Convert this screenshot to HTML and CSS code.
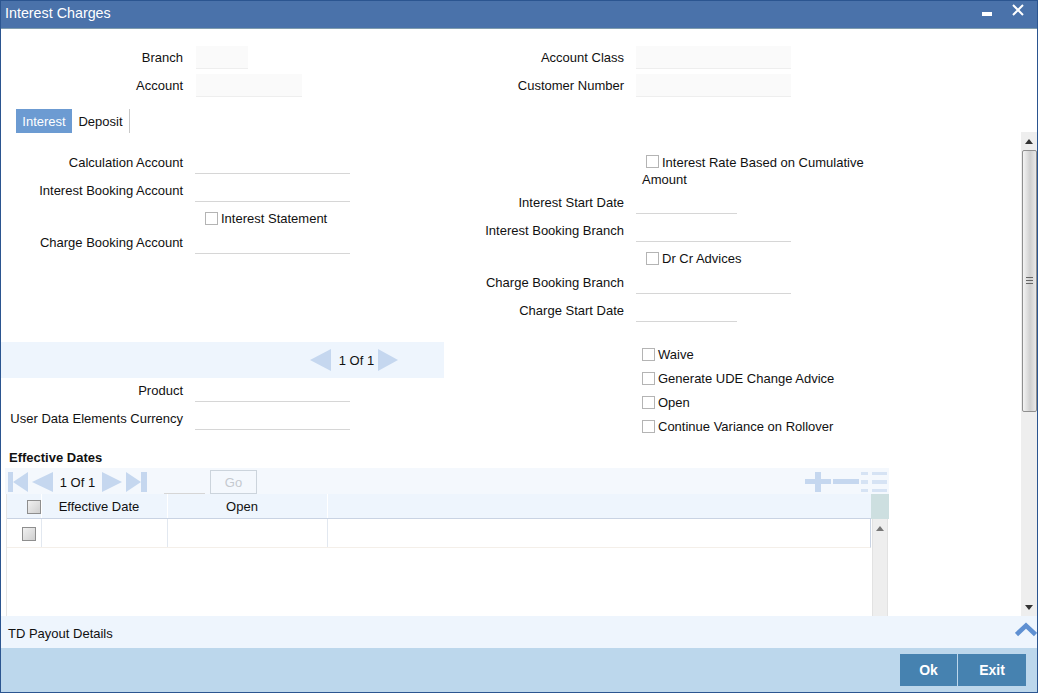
FILE: index.html
```html
<!DOCTYPE html>
<html lang="en">
<head>
<meta charset="utf-8">
<title>Interest Charges</title>
<link rel="stylesheet" href="styles.css">
</head>
<body>
<div class="window">
  <header class="titlebar">
    <h1 class="title">Interest Charges</h1>
    <div class="win-controls">
      <svg class="win-min" width="10" height="4" viewBox="0 0 10 4"><rect width="10" height="4" fill="#fff"/></svg>
      <svg class="win-close" width="12" height="12" viewBox="0 0 12 12"><path d="M1 1 11 11M11 1 1 11" stroke="#fff" stroke-width="2" fill="none"/></svg>
    </div>
  </header>

  <section class="header-form">
    <div class="header-col">
      <div class="row"><label class="lbl lbl-left">Branch</label><input class="field field-head w52"></div>
      <div class="row"><label class="lbl lbl-left">Account</label><input class="field field-head w106"></div>
    </div>
    <div class="header-col">
      <div class="row"><label class="lbl lbl-right">Account Class</label><input class="field field-head w155"></div>
      <div class="row"><label class="lbl lbl-right">Customer Number</label><input class="field field-head w155"></div>
    </div>
  </section>

  <nav class="tabs">
    <span class="tab tab-active">Interest</span>
    <span class="tab">Deposit</span>
  </nav>

  <div class="scroll-area">
    <div class="scroll-content">
      <div class="form-grid">
        <div class="col-left">
          <div class="row"><label class="lbl lbl-left">Calculation Account</label><input class="field w155"></div>
          <div class="row"><label class="lbl lbl-left">Interest Booking Account</label><input class="field w155"></div>
          <div class="check-row-left"><input type="checkbox" class="check"><span>Interest Statement</span></div>
          <div class="row"><label class="lbl lbl-left">Charge Booking Account</label><input class="field w155"></div>
          <div class="pager">
            <svg width="21" height="22" viewBox="0 0 21 22"><path d="M21 0V22L0 11Z" fill="#c5d7ef"/></svg>
            <span class="pager-text">1 Of 1</span>
            <svg width="20" height="22" viewBox="0 0 20 22"><path d="M0 0V22L20 11Z" fill="#c5d7ef"/></svg>
          </div>
          <div class="row row-first"><label class="lbl lbl-left">Product</label><input class="field w155"></div>
          <div class="row"><label class="lbl lbl-left">User Data Elements Currency</label><input class="field w155"></div>
        </div>
        <div class="col-right">
          <div class="wrap-check"><input type="checkbox" class="check check-wrap">Interest Rate Based on Cumulative<br>Amount</div>
          <div class="row"><label class="lbl lbl-right">Interest Start Date</label><input class="field w101"></div>
          <div class="row"><label class="lbl lbl-right">Interest Booking Branch</label><input class="field w155"></div>
          <div class="check-row-dr"><input type="checkbox" class="check"><span>Dr Cr Advices</span></div>
          <div class="row"><label class="lbl lbl-right">Charge Booking Branch</label><input class="field w155"></div>
          <div class="row"><label class="lbl lbl-right">Charge Start Date</label><input class="field w101"></div>
          <div class="check-list">
            <div class="check-item"><input type="checkbox" class="check"><span>Waive</span></div>
            <div class="check-item"><input type="checkbox" class="check"><span>Generate UDE Change Advice</span></div>
            <div class="check-item"><input type="checkbox" class="check"><span>Open</span></div>
            <div class="check-item"><input type="checkbox" class="check"><span>Continue Variance on Rollover</span></div>
          </div>
        </div>
      </div>

      <h2 class="section-title">Effective Dates</h2>
      <div class="toolbar">
        <div class="tool-nav">
          <svg width="20" height="20" viewBox="0 0 20 20"><path d="M0 0H5V20H0ZM20 0V20L5 10Z" fill="#c5d7ef"/></svg>
          <svg width="21" height="20" viewBox="0 0 21 20"><path d="M21 0V20L0 10Z" fill="#c5d7ef"/></svg>
          <span class="tool-text">1 Of 1</span>
          <svg width="20" height="20" viewBox="0 0 20 20"><path d="M0 0V20L20 10Z" fill="#c5d7ef"/></svg>
          <svg width="21" height="20" viewBox="0 0 21 20"><path d="M0 0 15 10 0 20ZM15 0H21V20H15Z" fill="#c5d7ef"/></svg>
          <input class="go-input">
          <button class="go-btn" type="button">Go</button>
        </div>
        <div class="tool-actions">
          <svg width="26" height="20" viewBox="0 0 26 20"><path d="M0 7H10V0H16V7H26V12H16V20H10V12H0Z" fill="#c5d7ef"/></svg>
          <svg width="26" height="20" viewBox="0 0 26 20"><rect y="7" width="26" height="5" fill="#c5d7ef"/></svg>
          <svg width="26" height="20" viewBox="0 0 26 20"><path d="M0 0H7V3H0ZM11 0H26V3H11ZM0 8H7V12H0ZM11 8H26V12H11ZM0 17H7V20H0ZM11 17H26V20H11Z" fill="#d6e3f4"/></svg>
        </div>
      </div>

      <div class="table-wrap">
        <div class="table-main">
          <div class="thead">
            <div class="cell cell-check"><input type="checkbox" class="check check-grey check-head"></div>
            <div class="cell cell-date th-text">Effective Date</div>
            <div class="cell cell-open th-text">Open</div>
            <div class="cell cell-rest"></div>
          </div>
          <div class="tbody-row">
            <div class="cell cell-check"><input type="checkbox" class="check check-grey check-body"></div>
            <div class="cell cell-date"></div>
            <div class="cell cell-open"></div>
            <div class="cell cell-rest"></div>
          </div>
        </div>
        <div class="table-side">
          <div class="side-head"></div>
          <div class="side-track">
            <svg class="arrow" width="8" height="5" viewBox="0 0 8 5"><path d="M4 0 8 5H0Z" fill="#777"/></svg>
          </div>
        </div>
      </div>
    </div>

    <div class="scrollbar">
      <div class="sb-btn">
        <svg width="8" height="5" viewBox="0 0 8 5"><path d="M4 0 8 5H0Z" fill="#333"/></svg>
      </div>
      <div class="sb-thumb"><span class="grip"></span></div>
      <div class="sb-rest">
        <svg width="8" height="5" viewBox="0 0 8 5"><path d="M0 0H8L4 5Z" fill="#333"/></svg>
      </div>
    </div>
  </div>

  <div class="payout">
    <span class="payout-text">TD Payout Details</span>
    <svg width="22" height="15" viewBox="0 0 22 15"><path d="M1.500 12.500 11 3.500 20.500 12.500" fill="none" stroke="#5f90d2" stroke-width="4.500"/></svg>
  </div>

  <footer class="footer">
    <button class="action" type="button">Ok</button>
    <button class="action action-exit" type="button">Exit</button>
  </footer>
</div>
</body>
</html>
```
FILE: styles.css
```css
* { box-sizing: border-box; }
html, body { margin: 0; padding: 0; }
body {
  width: 1038px;
  height: 693px;
  overflow: hidden;
  background: #fff;
  font-family: "Liberation Sans", Arial, sans-serif;
  font-size: 13px;
  color: #111;
}
input, button { font-family: inherit; font-size: 13px; margin: 0; }

.window {
  width: 1038px;
  height: 693px;
  display: flex;
  flex-direction: column;
  border: 1px solid #2b5590;
  background: #fff;
}

.titlebar {
  height: 28px;
  flex: none;
  display: flex;
  justify-content: space-between;
  background: #4a72aa;
  border-bottom: 1px solid #7f9cae;
  padding-left: 4px;
}
.title {
  margin: 3px 0 0;
  font-size: 14.3px;
  font-weight: normal;
  line-height: 18px;
  color: #fff;
}
.win-controls {
  display: flex;
  align-items: flex-start;
  gap: 20px;
  padding-right: 13px;
}
.win-min { margin-top: 11px; }
.win-close { margin-top: 3px; }

.header-form {
  flex: none;
  display: grid;
  grid-template-columns: 444px 1fr;
  padding-top: 17px;
}
.header-col { display: flex; flex-direction: column; gap: 5px; }

.row { display: flex; align-items: center; height: 23px; flex: none; }
.lbl { text-align: right; flex: none; line-height: 22px; height: 22px; }
.lbl-left { width: 182px; margin-right: 12px; }
.lbl-right { width: 179px; margin-right: 12px; }

.field {
  height: 23px;
  flex: none;
  border: 0;
  border-bottom: 1px solid #d6d6d6;
  background: #fff;
  padding: 0;
}
.field-head {
  background: #fafafa;
  border-bottom-color: #eeeeee;
}
.header-col:first-child .field-head { margin-left: 1px; }
.w52 { width: 52px; }
.w101 { width: 101px; }
.w106 { width: 106px; }
.w155 { width: 155px; }

.tabs {
  flex: none;
  display: flex;
  height: 24px;
  margin-top: 12px;
  padding-left: 15px;
}
.tab {
  display: flex;
  align-items: center;
  justify-content: center;
  width: 58px;
  border-right: 1px solid #c8c8c8;
  color: #111;
}
.tab-active {
  width: 56px;
  background: #6c9bd2;
  border-right: 0;
  color: #fff;
}

.scroll-area {
  flex: 1;
  min-height: 0;
  display: flex;
}
.scroll-content {
  flex: 1;
  min-width: 0;
  display: flex;
  flex-direction: column;
}

.form-grid {
  flex: none;
  display: grid;
  grid-template-columns: 444px 1fr;
}
.col-left {
  display: flex;
  flex-direction: column;
  gap: 5px;
  padding-top: 18px;
}
.col-right {
  display: flex;
  flex-direction: column;
  padding-top: 21px;
}

.check {
  appearance: none;
  -webkit-appearance: none;
  display: block;
  flex: none;
  width: 13px;
  height: 13px;
  margin: 0;
  border: 1px solid #b4b4b4;
  background: #fff;
}
.check-grey {
  width: 14px;
  height: 14px;
  border-color: #8e8e8e;
  background: linear-gradient(135deg, #f1f1f1, #cfcfcf);
}

.check-row-left {
  display: flex;
  align-items: center;
  gap: 3px;
  height: 19px;
  padding: 4px 0 0 204px;
}

.wrap-check {
  line-height: 17px;
  padding-left: 197px;
  height: 34px;
  margin-bottom: 3px;
}
.check-wrap {
  display: inline-block;
  vertical-align: -1px;
  margin: 0 3px 0 4px;
}
.col-right > .row { margin-bottom: 5px; }
.check-row-dr {
  display: flex;
  align-items: center;
  gap: 3px;
  height: 24px;
  margin-top: -1px;
  margin-bottom: 1px;
  padding-left: 201px;
}
.check-list {
  margin-top: 15px;
  padding-left: 197px;
}
.check-item {
  display: flex;
  align-items: center;
  gap: 3px;
  height: 24px;
}

.pager {
  height: 36px;
  margin-top: 83px;
  margin-right: 1px;
  background: #eef5fd;
  display: flex;
  align-items: center;
  padding-left: 309px;
}
.pager-text { width: 47px; padding-left: 4px; text-align: center; white-space: nowrap; }
.row-first { margin-top: -4px; }

.section-title {
  flex: none;
  margin: 10px 0 0 8px;
  height: 20px;
  line-height: 20px;
  font-size: 13px;
  font-weight: bold;
}

.toolbar {
  flex: none;
  height: 26px;
  margin-left: 4px;
  width: 884px;
  display: flex;
  align-items: center;
  justify-content: space-between;
  background: #f4f8fd;
  padding: 2px 2px 0 3px;
}
.tool-nav { display: flex; align-items: center; gap: 4px; }
.tool-text { width: 41px; text-align: center; white-space: nowrap; }
.go-input {
  width: 41px;
  height: 24px;
  margin-left: 13px;
  border: 0;
  border-bottom: 1px solid #d6d6d6;
  background: transparent;
  padding: 0;
}
.go-btn {
  width: 47px;
  height: 24px;
  margin-left: 1px;
  padding: 0;
  border: 1px solid #ccd4dc;
  background: #f4f8fd;
  color: #c4c9cf;
}
.tool-actions { display: flex; gap: 2px; }

.table-wrap {
  flex: 1;
  min-height: 0;
  overflow: hidden;
  display: flex;
  margin-left: 5px;
  width: 883px;
}
.table-main {
  width: 865px;
  flex: none;
  border-left: 1px solid #e4e4e4;
}
.thead {
  display: flex;
  height: 25px;
  background: #eef5fd;
  border-bottom: 1px solid #c9d3e3;
}
.tbody-row {
  display: flex;
  height: 29px;
  border-bottom: 1px solid #f4efe9;
  border-right: 1px solid #c9d3e3;
}
.cell { height: 100%; display: flex; align-items: center; flex: none; }
.cell-check { width: 35px; border-right: 1px solid #e2e8f0; }
.cell-date { width: 126px; border-right: 1px solid #e2e8f0; }
.cell-open { width: 160px; border-right: 1px solid #e2e8f0; }
.thead .cell { border-right-color: #fff; }
.cell-rest { flex: 1; border-right: 0; }
.th-text { justify-content: center; padding-right: 11px; }
.check-head { margin-left: 20px; margin-top: 2px; }
.check-body { margin-left: 15px; margin-top: 2px; }

.table-side { width: 18px; flex: none; display: flex; flex-direction: column; }
.side-head { height: 25px; background: #cddfe0; }
.side-track {
  flex: 1;
  margin: 0 1px;
  background: #eeeeee;
  border-left: 1px solid #e2e2e2;
  border-right: 1px solid #e2e2e2;
  display: flex;
  justify-content: center;
  align-items: flex-start;
}
.arrow { margin-top: 7px; }

.scrollbar {
  flex: none;
  width: 16px;
  margin-top: -1px;
  display: flex;
  flex-direction: column;
  background: #eeeeee;
}
.sb-btn {
  height: 18px;
  flex: none;
  display: flex;
  align-items: center;
  justify-content: center;
}
.sb-thumb {
  height: 262px;
  flex: none;
  margin-left: 1px;
  border: 1px solid #8f8f8f;
  border-radius: 2px;
  background: linear-gradient(90deg, #f4f4f4, #cfcfcf 55%, #e8e8e8);
  display: flex;
  align-items: center;
  justify-content: center;
}
.grip {
  width: 7px;
  height: 8px;
  background: repeating-linear-gradient(180deg, #666 0, #666 1px, transparent 1px, transparent 3px);
}
.sb-rest {
  flex: 1;
  display: flex;
  align-items: flex-end;
  justify-content: center;
  padding-bottom: 6px;
}

.payout {
  flex: none;
  height: 32px;
  background: #eef5fd;
  display: flex;
  align-items: center;
  justify-content: space-between;
  padding-left: 7px;
}
.payout-text { padding-top: 2px; }
.payout svg { margin-top: -6px; }

.footer {
  flex: none;
  height: 44px;
  background: #bcd7ec;
  display: flex;
  align-items: flex-start;
  gap: 1px;
  padding: 6px 0 0 899px;
}
.action {
  width: 57px;
  height: 32px;
  padding: 0;
  border: 0;
  background: #4682b0;
  color: #fff;
  font-size: 14px;
  font-weight: bold;
}
.action-exit { width: 68px; }
```
